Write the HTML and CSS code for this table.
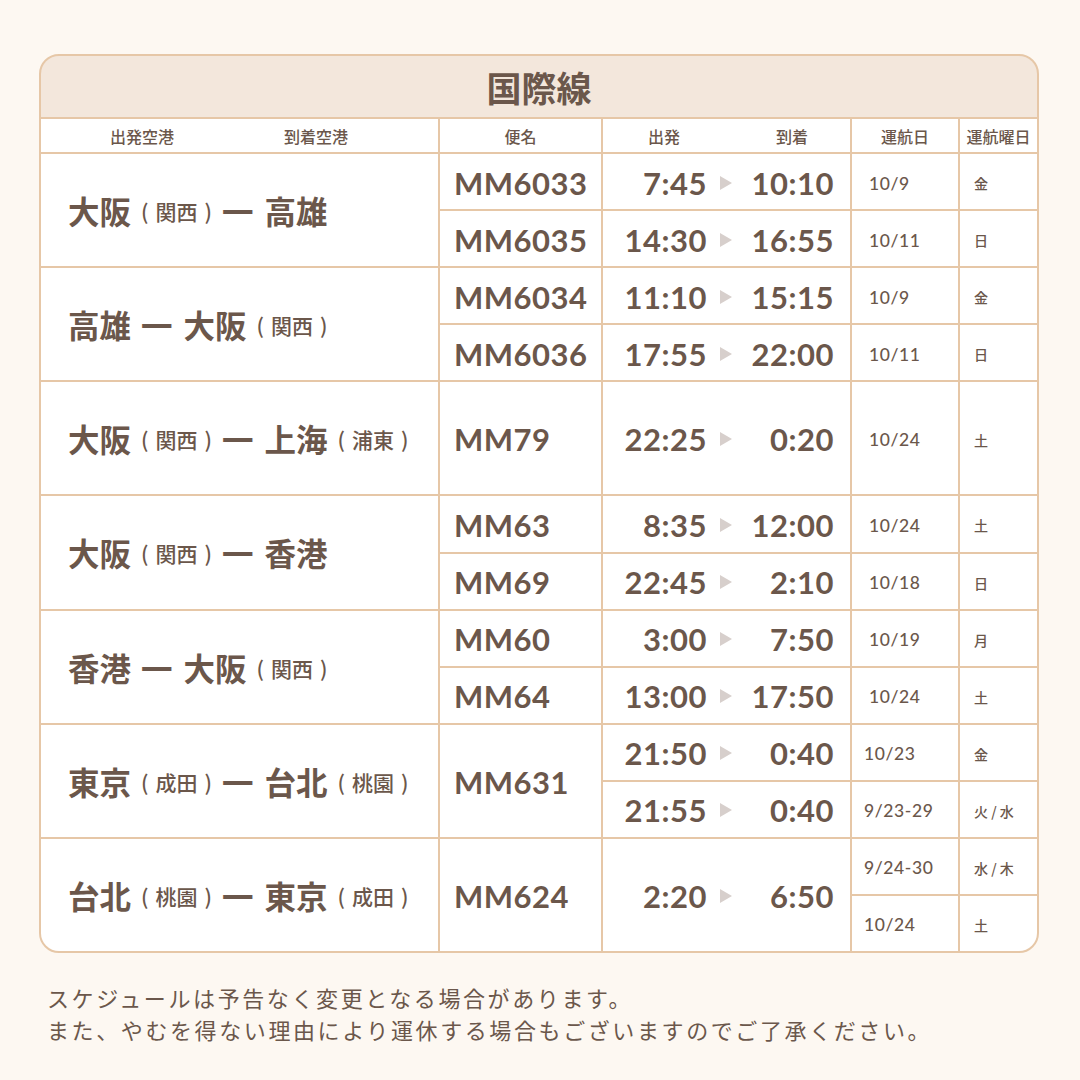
FILE: index.html
```html
<!DOCTYPE html>
<html lang="ja">
<head>
<meta charset="utf-8">
<link rel="stylesheet" href="styles.css">
</head>
<body>
<div class="page">
  <div class="board">
    <div class="title">国際線</div>
    <div class="grid">
      <div class="hd hd-route"><span>出発空港</span><span>到着空港</span></div>
      <div class="hd">便名</div>
      <div class="hd hd-time"><span>出発</span><span>到着</span></div>
      <div class="hd">運航日</div>
      <div class="hd">運航曜日</div>

      <!-- 1 -->
      <div class="route r2">大阪<small>(<span>関西</span>)</small><span class="dash">一</span>高雄</div>
      <div class="flt">MM6033</div>
      <div class="tm"><span class="dep">7:45</span><i class="arr"></i><span class="arv">10:10</span></div>
      <div class="dt">10/9</div>
      <div class="dy">金</div>
      <div class="flt">MM6035</div>
      <div class="tm"><span class="dep">14:30</span><i class="arr"></i><span class="arv">16:55</span></div>
      <div class="dt">10/11</div>
      <div class="dy">日</div>

      <!-- 2 -->
      <div class="route r2">高雄<span class="dash">一</span>大阪<small>(<span>関西</span>)</small></div>
      <div class="flt">MM6034</div>
      <div class="tm"><span class="dep">11:10</span><i class="arr"></i><span class="arv">15:15</span></div>
      <div class="dt">10/9</div>
      <div class="dy">金</div>
      <div class="flt">MM6036</div>
      <div class="tm"><span class="dep">17:55</span><i class="arr"></i><span class="arv">22:00</span></div>
      <div class="dt">10/11</div>
      <div class="dy">日</div>

      <!-- 3 -->
      <div class="route r2">大阪<small>(<span>関西</span>)</small><span class="dash">一</span>上海<small>(<span>浦東</span>)</small></div>
      <div class="flt r2">MM79</div>
      <div class="tm r2"><span class="dep">22:25</span><i class="arr"></i><span class="arv">0:20</span></div>
      <div class="dt r2">10/24</div>
      <div class="dy r2">土</div>

      <!-- 4 -->
      <div class="route r2">大阪<small>(<span>関西</span>)</small><span class="dash">一</span>香港</div>
      <div class="flt">MM63</div>
      <div class="tm"><span class="dep">8:35</span><i class="arr"></i><span class="arv">12:00</span></div>
      <div class="dt">10/24</div>
      <div class="dy">土</div>
      <div class="flt">MM69</div>
      <div class="tm"><span class="dep">22:45</span><i class="arr"></i><span class="arv">2:10</span></div>
      <div class="dt">10/18</div>
      <div class="dy">日</div>

      <!-- 5 -->
      <div class="route r2">香港<span class="dash">一</span>大阪<small>(<span>関西</span>)</small></div>
      <div class="flt">MM60</div>
      <div class="tm"><span class="dep">3:00</span><i class="arr"></i><span class="arv">7:50</span></div>
      <div class="dt">10/19</div>
      <div class="dy">月</div>
      <div class="flt">MM64</div>
      <div class="tm"><span class="dep">13:00</span><i class="arr"></i><span class="arv">17:50</span></div>
      <div class="dt">10/24</div>
      <div class="dy">土</div>

      <!-- 6 -->
      <div class="route r2">東京<small>(<span>成田</span>)</small><span class="dash">一</span>台北<small>(<span>桃園</span>)</small></div>
      <div class="flt r2">MM631</div>
      <div class="tm"><span class="dep">21:50</span><i class="arr"></i><span class="arv">0:40</span></div>
      <div class="dt dt-s">10/23</div>
      <div class="dy">金</div>
      <div class="tm"><span class="dep">21:55</span><i class="arr"></i><span class="arv">0:40</span></div>
      <div class="dt dt-s">9/23-29</div>
      <div class="dy">火 / 水</div>

      <!-- 7 -->
      <div class="route r2">台北<small>(<span>桃園</span>)</small><span class="dash">一</span>東京<small>(<span>成田</span>)</small></div>
      <div class="flt r2">MM624</div>
      <div class="tm r2"><span class="dep">2:20</span><i class="arr"></i><span class="arv">6:50</span></div>
      <div class="dt dt-s">9/24-30</div>
      <div class="dy">水 / 木</div>
      <div class="dt dt-s">10/24</div>
      <div class="dy">土</div>
    </div>
  </div>
  <div class="note">
    <p>スケジュールは予告なく変更となる場合があります。</p>
    <p>また、やむを得ない理由により運休する場合もございますのでご了承ください。</p>
  </div>
</div>
</body>
</html>
```

FILE: styles.css
```css
* { box-sizing: border-box; }

html, body {
  margin: 0;
  padding: 0;
  background: #fdf8f2;
}

body {
  width: 1080px;
  height: 1080px;
  overflow: hidden;
  color: #6b574b;
  font-family: "Noto Sans CJK JP", "Noto Sans", sans-serif;
}

.page {
  padding: 54px 41px 0 39px;
}

.board {
  width: 1000px;
  border: 2px solid #e6c7a7;
  border-radius: 20px;
  overflow: hidden;
  background: #e6c7a7;
}

.title {
  height: 61px;
  background: #f3e7dc;
  display: flex;
  align-items: center;
  justify-content: center;
  font-size: 35px;
  font-weight: 700;
  line-height: 1;
}

.grid {
  display: grid;
  grid-template-columns: 397px 161px 247px 106px 77px;
  grid-template-rows: 33px repeat(14, 1fr);
  gap: 2px;
  margin-top: 2px;
  height: 832px;
}

.grid > div {
  background: #fff;
  display: flex;
  align-items: center;
}

.r2 { grid-row: span 2; }

.hd {
  justify-content: center;
  font-size: 16px;
  font-weight: 500;
  padding-top: 1px;
}

.hd-route {
  justify-content: flex-start !important;
  padding-left: 69px;
  gap: 110px;
}

.hd-time {
  justify-content: flex-start !important;
  padding-left: 45px;
  gap: 96px;
}

.route {
  padding-left: 27px;
  font-size: 31.5px;
  font-weight: 700;
  white-space: nowrap;
}

.route small {
  font-size: 21px;
  font-weight: 500;
  margin-left: 10px;
  position: relative;
  top: 1px;
}

.route small span {
  margin: 0 7px;
}

.route .dash {
  margin: 0 11px 0 10px;
}

.flt {
  padding-left: 14px;
  font-family: "Lato", "Noto Sans", sans-serif;
  font-size: 31px;
  font-weight: 700;
  letter-spacing: 0.5px;
  padding-top: 2px;
}

.tm {
  padding: 2px 16px 0 10px;
  font-family: "Lato", "Noto Sans", sans-serif;
  font-size: 31px;
  font-weight: 700;
  letter-spacing: 0.5px;
}

.tm .dep {
  width: 94px;
  text-align: right;
}

.tm .arr {
  display: block;
  width: 0;
  height: 0;
  border-left: 12px solid #d7cfcc;
  border-top: 7px solid transparent;
  border-bottom: 7px solid transparent;
  margin: 0 9px 0 13px;
}

.tm .arv {
  flex: 1;
  text-align: right;
}

.dt {
  padding-left: 17px;
  font-family: "Lato", "Noto Sans", sans-serif;
  font-size: 17.5px;
  font-weight: 500;
  letter-spacing: 0.6px;
  padding-top: 3px;
}

.dt-s { padding-left: 12px; }

.dy {
  padding-left: 14px;
  font-size: 14px;
  font-weight: 500;
  padding-top: 3px;
  white-space: pre;
}

.note {
  margin-top: 28px;
  padding-left: 8px;
  font-size: 22px;
  letter-spacing: 2.6px;
  line-height: 32px;
  font-weight: 400;
}

.note p { margin: 0; }
```
